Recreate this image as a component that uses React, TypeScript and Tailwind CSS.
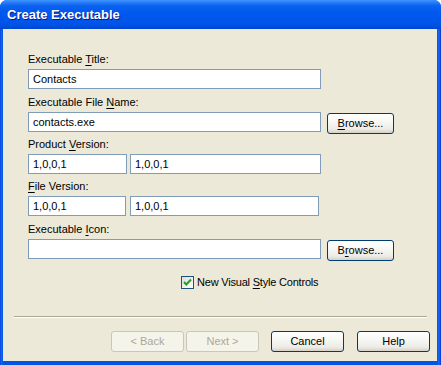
import React from "react";

const font = { fontFamily: '"Liberation Sans", Arial, sans-serif' };

function U({ children }: { children: React.ReactNode }) {
  return <span className="underline underline-offset-[2px] decoration-[1px]">{children}</span>;
}

function Label({ children, className = "" }: { children: React.ReactNode; className?: string }) {
  return <div className={"h-[13px] leading-[13px] text-[11px] text-black " + className}>{children}</div>;
}

function Input({ value, w }: { value: string; w: string }) {
  return (
    <div
      className={
        "h-[20px] border border-[#7f9db9] bg-white px-[4px] flex items-center text-[11px] text-black shrink-0 " + w
      }
    >
      {value}
    </div>
  );
}

function Btn({
  children,
  disabled = false,
  className = "",
}: {
  children: React.ReactNode;
  disabled?: boolean;
  className?: string;
}) {
  if (disabled) {
    return (
      <div
        className={
          "h-[21px] w-[73px] rounded-[3px] border border-[#c9c7ba] bg-[#f5f4ea] text-[#aca899] text-[11px] flex items-center justify-center shrink-0 " +
          className
        }
      >
        {children}
      </div>
    );
  }
  return (
    <div
      className={
        "h-[21px] rounded-[3px] border border-[#003c74] bg-[linear-gradient(to_bottom,#ffffff_0%,#f7f7f4_40%,#ecebe6_80%,#d6d0c5_100%)] text-black text-[11px] flex items-center justify-center shrink-0 " +
        className
      }
    >
      {children}
    </div>
  );
}

export default function App() {
  return (
    <div className="w-[441px] h-[365px] bg-white" style={font}>
      <div className="w-[441px] h-[365px] rounded-t-[7px] overflow-hidden flex flex-col bg-[linear-gradient(to_right,#0831d9_0px,#166aee_1px,#0055e5_3px,#0055e5_437px,#166aee_439px,#0831d9_441px)]">
        <div className="h-[29px] shrink-0 flex items-center pl-[7px] bg-[linear-gradient(to_bottom,#3d95ff_0%,#2a7ff8_8%,#0a62ef_20%,#0058ee_45%,#0055eb_75%,#0050e0_90%,#0046d1_100%)]">
          <span className="text-white font-bold text-[13px] leading-none [text-shadow:1px_1px_0_#0a1883]">
            Create Executable
          </span>
        </div>
        <div className="flex-1 ml-[3px] mr-[4px] mb-[4px] bg-[#ece9d8] flex flex-col">
          <div className="pl-[25px] pt-[24px] flex flex-col">
            <Label className="mb-[3px]">
              Executable <U>T</U>itle:
            </Label>
            <Input value="Contacts" w="w-[293px]" />

            <Label className="mt-[7px] mb-[3px]">
              Executable File <U>N</U>ame:
            </Label>
            <div className="flex items-start h-[20px]">
              <Input value="contacts.exe" w="w-[293px]" />
              <Btn className="w-[67px] ml-[6px] mt-[1px]">
                <U>B</U>rowse...
              </Btn>
            </div>

            <Label className="mt-[6px] mb-[3px]">
              Product <U>V</U>ersion:
            </Label>
            <div className="flex">
              <Input value="1,0,0,1" w="w-[99px]" />
              <div className="w-[3px]" />
              <Input value="1,0,0,1" w="w-[191px]" />
            </div>

            <Label className="mt-[6px] mb-[3px]">
              <U>F</U>ile Version:
            </Label>
            <div className="flex">
              <Input value="1,0,0,1" w="w-[98px]" />
              <div className="w-[4px]" />
              <Input value="1,0,0,1" w="w-[189px]" />
            </div>

            <Label className="mt-[7px] mb-[3px]">
              Executable <U>I</U>con:
            </Label>
            <div className="flex items-start h-[20px]">
              <Input value="" w="w-[293px]" />
              <Btn className="w-[67px] ml-[6px] mt-[1px]">
                B<U>r</U>owse...
              </Btn>
            </div>

            <div className="mt-[17px] ml-[153px] h-[13px] flex items-center">
              <div className="w-[13px] h-[13px] border border-[#1c5180] bg-[linear-gradient(135deg,#dcdcd7,#ffffff)] flex items-center justify-center shrink-0">
                <svg width="9" height="9" viewBox="0 0 9 9">
                  <path d="M1 4 L3.3 6.5 L8 1.5" stroke="#21a121" strokeWidth="2" fill="none" />
                </svg>
              </div>
              <span className="ml-[3px] text-[11px] leading-[13px] text-black tracking-[-0.2px]">
                New Visual <U>S</U>tyle Controls
              </span>
            </div>
          </div>

          <div className="mt-[27px] ml-[11px] mr-[10px] border-t border-[#aca899] border-b border-b-white" />

          <div className="mt-[13px] flex justify-end pr-[7px]">
            <Btn disabled>&lt; Back</Btn>
            <Btn disabled className="ml-[2px]">
              Next &gt;
            </Btn>
            <Btn className="w-[73px] ml-[12px]">Cancel</Btn>
            <Btn className="w-[73px] ml-[13px]">Help</Btn>
          </div>
        </div>
      </div>
    </div>
  );
}
